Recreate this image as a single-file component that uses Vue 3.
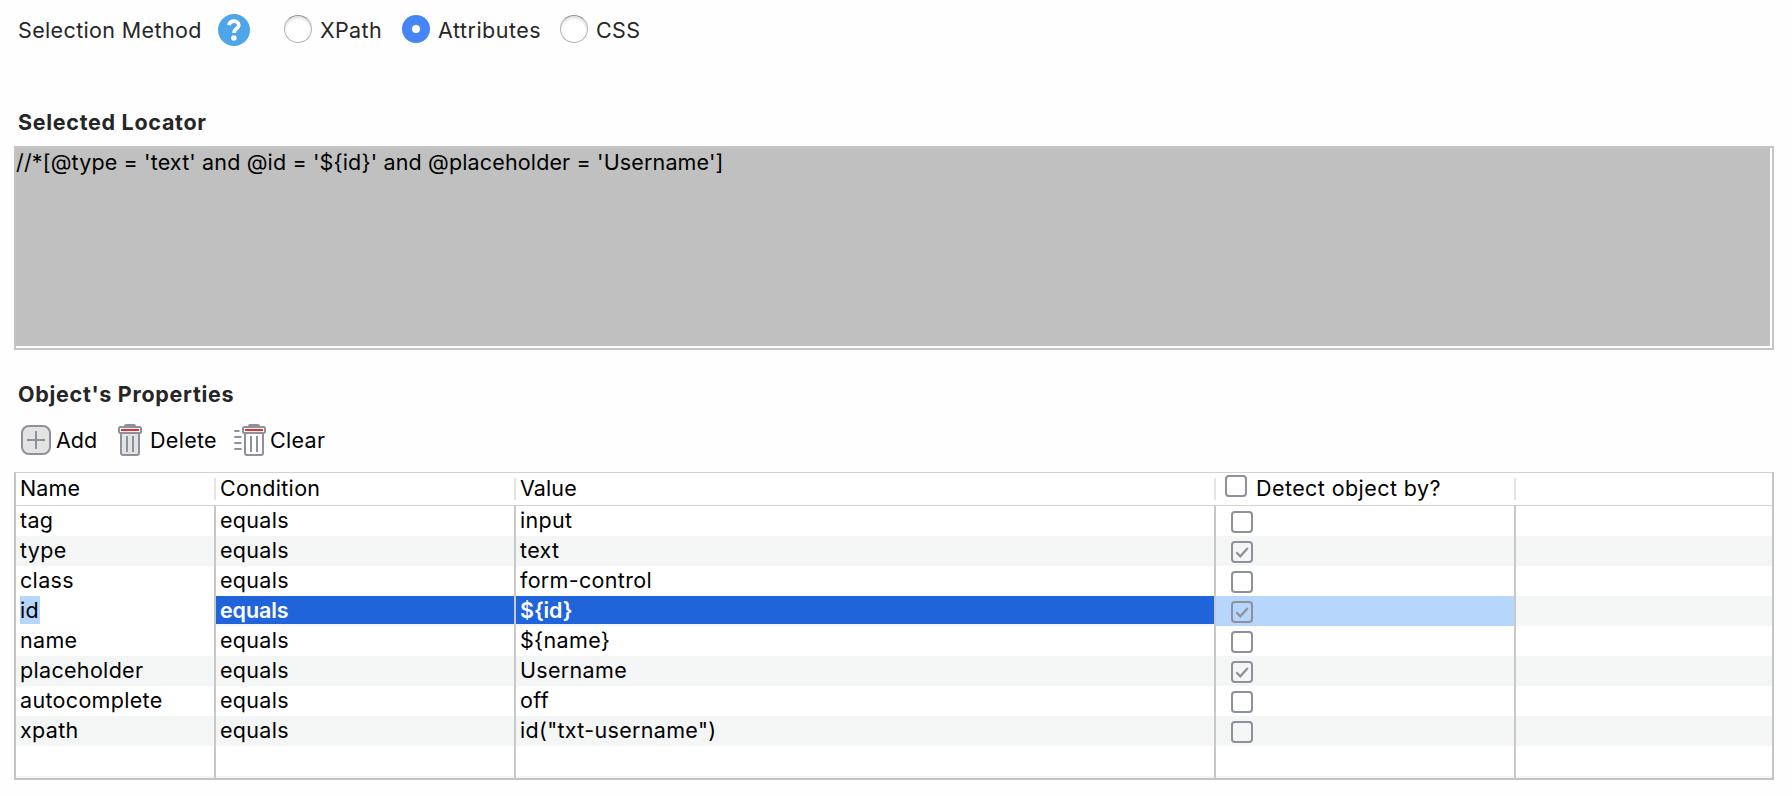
<script setup>
const methods = [
  { label: 'XPath', cls: 'm-xpath', on: false },
  { label: 'Attributes', cls: 'm-attr', on: true },
  { label: 'CSS', cls: 'm-css', on: false },
]
const locator = "//*[@type = 'text' and @id = '${id}' and @placeholder = 'Username']"
const rows = [
  { name: 'tag', value: 'input', on: false },
  { name: 'type', value: 'text', on: true },
  { name: 'class', value: 'form-control', on: false },
  { name: 'id', value: '${id}', on: true, selected: true },
  { name: 'name', value: '${name}', on: false },
  { name: 'placeholder', value: 'Username', on: true },
  { name: 'autocomplete', value: 'off', on: false },
  { name: 'xpath', value: 'id("txt-username")', on: false },
]
</script>

<template>
  <main class="panel">
    <div class="method">
      <span class="method-label">Selection Method</span>
      <svg class="help" width="32" height="32" viewBox="0 0 32 32">
        <circle cx="16" cy="16" r="16" fill="#4ea5e8" />
        <path d="M10.9 11.2C11.4 8.600 13.400 7.200 16.100 7.200C18.900 7.200 20.800 8.800 20.800 11.200C20.800 14.600 16 14.500 16 18.900" fill="none" stroke="#fff" stroke-width="3.700" />
        <circle cx="15.900" cy="24" r="2.700" fill="#fff" />
      </svg>
      <label v-for="m in methods" :key="m.label" class="choice" :class="m.cls">
        <span class="radio" :class="{ on: m.on }"></span>
        <span>{{ m.label }}</span>
      </label>
    </div>

    <h2 class="title locator-title">Selected Locator</h2>
    <div class="locator"><div class="locator-text">{{ locator }}</div></div>

    <h2 class="title props-title">Object's Properties</h2>
    <div class="toolbar">
      <button class="tool add">
        <svg width="30" height="30" viewBox="0 0 30 30" fill="none" stroke="#8d919b" stroke-width="2">
          <rect x="1" y="1" width="28" height="28" rx="7" fill="#e3e3e4" />
          <path d="M6 15H24M15 6V24" />
        </svg>
        <span>Add</span>
      </button>
      <button class="tool delete">
        <svg width="24" height="32" viewBox="0 0 24 32" fill="none" stroke="#8d919b" stroke-width="2">
          <path d="M6 2.500V1.800Q6 0 8 0H16Q18 0 18 1.800V2.500Z" fill="#8d919b" stroke="none" />
          <path d="M3 9V29Q3 31 5 31H19Q21 31 21 29V9" fill="#e3e3e4" />
          <rect x="1" y="3" width="22" height="6" rx="1.500" fill="#fff" />
          <path d="M3 6H21" stroke="#ee2c2c" />
          <path d="M9 12V28M15 12V28" />
        </svg>
        <span>Delete</span>
      </button>
      <button class="tool clear">
        <svg width="32" height="32" viewBox="0 0 32 32" fill="none" stroke="#8d919b" stroke-width="2">
          <path d="M14 2.500V1.800Q14 0 16 0H24Q26 0 26 1.800V2.500Z" fill="#8d919b" stroke="none" />
          <path d="M11 9V29Q11 31 13 31H27Q29 31 29 29V9" fill="#fff" />
          <rect x="9" y="3" width="22" height="6" rx="1.500" fill="#fff" />
          <path d="M11 6H29" stroke="#ee2c2c" />
          <path d="M17 12V28M23 12V28" />
          <path d="M.3 7H5.500M.3 13H7.500M.3 19H7.500M.3 25H7.500" stroke-width="1.800" />
        </svg>
        <span>Clear</span>
      </button>
    </div>

    <div class="table">
      <div class="head grid">
        <div class="hc first">Name</div>
        <div class="hc">Condition</div>
        <div class="hc value">Value</div>
        <div class="hc detect"><span class="box"></span><span>Detect object by?</span></div>
        <div class="hc last"></div>
      </div>
      <div v-for="r in rows" :key="r.name" class="row grid" :class="{ selected: r.selected }">
        <div class="cell name"><span class="fill">{{ r.name }}</span></div>
        <div class="cell blue"><span class="fill">equals</span></div>
        <div class="cell blue"><span class="fill">{{ r.value }}</span></div>
        <div class="cell check">
          <span class="box">
            <svg v-if="r.on" width="22" height="22" viewBox="0 0 22 22" fill="none" stroke="#8d9199" stroke-width="2.200">
              <path d="M5.300 11.300L9.300 15.300L16.800 6.900" />
            </svg>
          </span>
        </div>
        <div class="cell last"></div>
      </div>
      <div class="row grid"><div v-for="i in 4" :key="i" class="cell"></div><div class="cell last"></div></div>
      <div class="row grid sliver"><div v-for="i in 4" :key="i" class="cell"></div><div class="cell last"></div></div>
    </div>
  </main>
</template>

<style>
body { background: #fefefe; }
</style>

<style scoped>
* { box-sizing: border-box; }
.panel {
  width: 1792px;
  height: 796px;
  overflow: hidden;
  padding: 0 18px 0 14px;
  font-family: Inter, "Liberation Sans", sans-serif;
  font-size: 21.5px;
  color: #000;
  white-space: nowrap;
  display: flex;
  flex-direction: column;
}
.method {
  height: 60px;
  padding-left: 4px;
  display: flex;
  align-items: center;
  color: #262626;
  letter-spacing: 0.36px;
}
.method-label { width: 200px; }
.choice { display: flex; align-items: center; gap: 8px; }
.m-xpath { margin-left: 34px; width: 118px; }
.m-attr { width: 158px; letter-spacing: 0.5px; }
.radio {
  width: 28px;
  height: 28px;
  margin-top: -2px;
  border-radius: 50%;
  border: 1px solid #b4b4b4;
  border-top-color: #929292;
  background: #fff;
  box-shadow: inset 0 2px 3px #dedede;
}
.radio.on {
  border: 0;
  background: radial-gradient(circle, #fff 3.600px, #4685f5 4.600px);
  box-shadow: none;
}
.title { margin: 0; padding-left: 4px; font-size: 21.5px; font-weight: 700; color: #262626; line-height: 30px; letter-spacing: 0.7px; }
.locator-title { margin-top: 47px; height: 39px; }
.locator {
  height: 204px;
  border: solid #c4c4c4;
  border-width: 2px;
  padding: 0 2px 2px 0;
  background: #fff;
}
.locator-text { height: 198px; background: #c0c0c0; line-height: 28px; letter-spacing: 0.14px; }
.props-title { margin-top: 29px; height: 45px; }
.toolbar { height: 48px; display: flex; align-items: flex-start; }
.tool {
  display: flex;
  align-items: center;
  height: 32px;
  padding: 0;
  border: 0;
  background: none;
  font: inherit;
  color: inherit;
  letter-spacing: 0.3px;
}
.add { margin-left: 7px; width: 97px; gap: 5px; letter-spacing: 0; }
.delete { width: 116px; gap: 8px; }
.clear { gap: 4px; }
.table { height: 308px; border: 2px solid #c4c4c4; border-top: 1px solid #d2d2d2; background: #fff; letter-spacing: 0.32px; }
.grid { display: grid; grid-template-columns: 200px 300px 700px 300px 1fr; }
.head { height: 33px; border-bottom: 1px solid #d2d2d2; line-height: 30px; }
.hc { padding-left: 4px; height: 32px; background: linear-gradient(#e4e4e4, #e4e4e4) right 5px / 2px 22px no-repeat; }
.hc.first, .hc.value { letter-spacing: 0.1px; }
.hc.last { background: none; }
.detect { display: flex; padding-left: 9px; gap: 9px; letter-spacing: 0.42px; }
.detect .box { margin-top: 2px; }
.row { height: 30px; line-height: 28px; }
.row:nth-child(odd) { background: #f4f5f5; }
.sliver { height: 2px; }
.cell { border-right: 2px solid #c8c8c8; }
.cell.last { border-right: 0; }
.fill { display: block; padding-left: 4px; height: 28px; }
.check { padding: 5px 0 0 15px; }
.box { display: block; flex: none; width: 22px; height: 22px; border: 2px solid #8d919b; border-radius: 4px; background: transparent; }
.box svg { display: block; margin: -2px; }
.selected .name { background: #fff; padding-left: 4px; }
.selected .name .fill { background: #b7d6fc; width: 20px; padding-left: 0; }
.selected .blue .fill { background: #1f64da; color: #fff; font-weight: 600; letter-spacing: -0.1px; }
.selected .check { background: #b7d6fc; }
</style>
